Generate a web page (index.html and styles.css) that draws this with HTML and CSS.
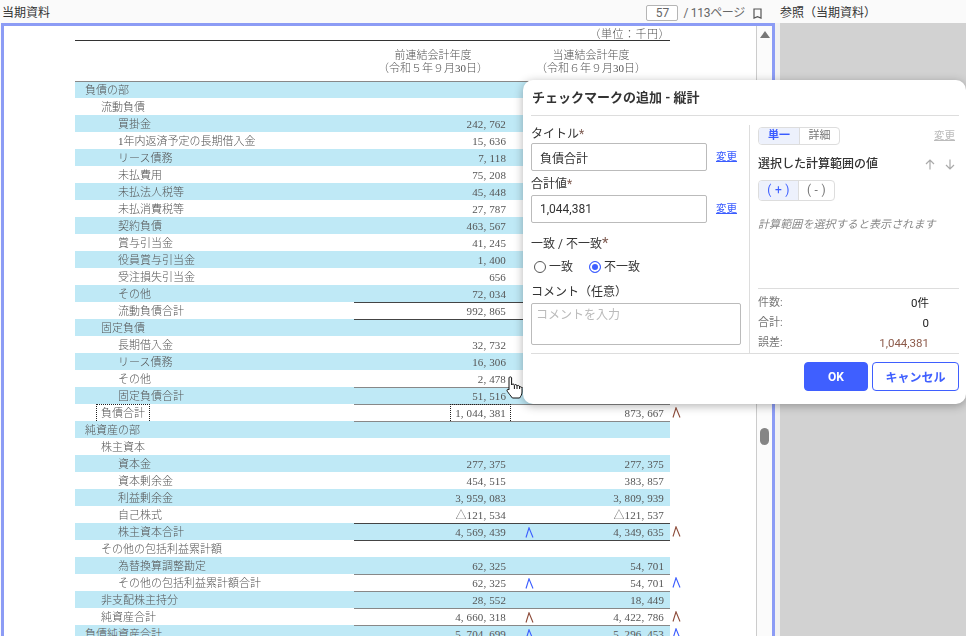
FILE: index.html
```html
<!DOCTYPE html>
<html>
	<head>
		<meta charset="UTF-8">
		<title>当期資料</title>
		<link rel="stylesheet" href="styles.css">
	</head>
	<body>
		<svg class="defs" width="0" height="0">
			<symbol id="chk" viewBox="0 0 9 11"><path d="M1 10.5 L4 .8 L8 10.5" fill="none" stroke="currentColor" stroke-width="1.1"/></symbol>
		</svg>

		<div class="bar">
			<div class="bar-left">
				<span class="bar-title">当期資料</span>
				<div class="pager">
					<span class="page-no">57</span>
					<span class="page-count">/ 113ページ</span>
					<svg class="bookmark" width="9" height="11" viewBox="0 0 9 11"><path d="M1 1 H8 V10 L4.5 8.6 L1 10 Z" fill="none" stroke="#555" stroke-width="1.2"/></svg>
				</div>
			</div>
			<span class="bar-right">参照（当期資料）</span>
		</div>

		<div class="main">
			<div class="viewer">
				<div class="page">
					<div class="unit">（単位：千円）</div>
					<div class="head">
						<div>前連結会計年度<br>（令和５年９月30日）</div>
						<div>当連結会計年度<br>（令和６年９月30日）</div>
					</div>

					<div class="row"><div class="cells tint top"><span class="name">負債の部</span><div class="nums"></div></div></div>
					<div class="row"><div class="cells"><span class="name l1">流動負債</span><div class="nums"></div></div></div>
					<div class="row"><div class="cells tint"><span class="name l2">買掛金</span><div class="nums"><span class="n1">242, 762</span></div></div></div>
					<div class="row"><div class="cells"><span class="name l2">1年内返済予定の長期借入金</span><div class="nums"><span class="n1">15, 636</span></div></div></div>
					<div class="row"><div class="cells tint"><span class="name l2">リース債務</span><div class="nums"><span class="n1">7, 118</span></div></div></div>
					<div class="row"><div class="cells"><span class="name l2">未払費用</span><div class="nums"><span class="n1">75, 208</span></div></div></div>
					<div class="row"><div class="cells tint"><span class="name l2">未払法人税等</span><div class="nums"><span class="n1">45, 448</span></div></div></div>
					<div class="row"><div class="cells"><span class="name l2">未払消費税等</span><div class="nums"><span class="n1">27, 787</span></div></div></div>
					<div class="row"><div class="cells tint"><span class="name l2">契約負債</span><div class="nums"><span class="n1">463, 567</span></div></div></div>
					<div class="row"><div class="cells"><span class="name l2">賞与引当金</span><div class="nums"><span class="n1">41, 245</span></div></div></div>
					<div class="row"><div class="cells tint"><span class="name l2">役員賞与引当金</span><div class="nums"><span class="n1">1, 400</span></div></div></div>
					<div class="row"><div class="cells"><span class="name l2">受注損失引当金</span><div class="nums"><span class="n1">656</span></div></div></div>
					<div class="row"><div class="cells tint"><span class="name l2">その他</span><div class="nums"><span class="n1">72, 034</span></div></div></div>
					<div class="row"><div class="cells"><span class="name l2">流動負債合計</span><div class="nums ru"><span class="n1">992, 865</span></div></div></div>
					<div class="row"><div class="cells tint"><span class="name l1">固定負債</span><div class="nums ru"></div></div></div>
					<div class="row"><div class="cells"><span class="name l2">長期借入金</span><div class="nums"><span class="n1">32, 732</span></div></div></div>
					<div class="row"><div class="cells tint"><span class="name l2">リース債務</span><div class="nums"><span class="n1">16, 306</span></div></div></div>
					<div class="row"><div class="cells"><span class="name l2">その他</span><div class="nums"><span class="n1">2, 478</span></div></div></div>
					<div class="row"><div class="cells tint"><span class="name l2">固定負債合計</span><div class="nums ru2"><span class="n1">51, 516</span></div></div></div>
					<div class="row">
						<div class="cells"><span class="name l1"><span class="sel">負債合計</span></span><div class="nums ru2"><span class="n1"><span class="sel">1, 044, 381</span></span><span class="c1"></span><span class="n2">873, 667</span></div></div>
						<svg class="mark out brown"><use href="#chk"/></svg>
					</div>
					<div class="row"><div class="cells tint"><span class="name">純資産の部</span><div class="nums ru2"></div></div></div>
					<div class="row"><div class="cells"><span class="name l1">株主資本</span><div class="nums"></div></div></div>
					<div class="row"><div class="cells tint"><span class="name l2">資本金</span><div class="nums"><span class="n1">277, 375</span><span class="c1"></span><span class="n2">277, 375</span></div></div></div>
					<div class="row"><div class="cells"><span class="name l2">資本剰余金</span><div class="nums"><span class="n1">454, 515</span><span class="c1"></span><span class="n2">383, 857</span></div></div></div>
					<div class="row"><div class="cells tint"><span class="name l2">利益剰余金</span><div class="nums"><span class="n1">3, 959, 083</span><span class="c1"></span><span class="n2">3, 809, 939</span></div></div></div>
					<div class="row"><div class="cells"><span class="name l2">自己株式</span><div class="nums"><span class="n1">△121, 534</span><span class="c1"></span><span class="n2">△121, 537</span></div></div></div>
					<div class="row">
						<div class="cells tint"><span class="name l2">株主資本合計</span><div class="nums ru"><span class="n1">4, 569, 439</span><span class="c1"><svg class="mark blue"><use href="#chk"/></svg></span><span class="n2">4, 349, 635</span></div></div>
						<svg class="mark out brown"><use href="#chk"/></svg>
					</div>
					<div class="row"><div class="cells"><span class="name l1">その他の包括利益累計額</span><div class="nums ru"></div></div></div>
					<div class="row"><div class="cells tint"><span class="name l2">為替換算調整勘定</span><div class="nums"><span class="n1">62, 325</span><span class="c1"></span><span class="n2">54, 701</span></div></div></div>
					<div class="row">
						<div class="cells"><span class="name l2">その他の包括利益累計額合計</span><div class="nums ru2"><span class="n1">62, 325</span><span class="c1"><svg class="mark blue"><use href="#chk"/></svg></span><span class="n2">54, 701</span></div></div>
						<svg class="mark out blue"><use href="#chk"/></svg>
					</div>
					<div class="row"><div class="cells tint"><span class="name l1">非支配株主持分</span><div class="nums ru2"><span class="n1">28, 552</span><span class="c1"></span><span class="n2">18, 449</span></div></div></div>
					<div class="row">
						<div class="cells"><span class="name l1">純資産合計</span><div class="nums ru2"><span class="n1">4, 660, 318</span><span class="c1"><svg class="mark brown"><use href="#chk"/></svg></span><span class="n2">4, 422, 786</span></div></div>
						<svg class="mark out brown"><use href="#chk"/></svg>
					</div>
					<div class="row">
						<div class="cells tint"><span class="name">負債純資産合計</span><div class="nums ru2"><span class="n1">5, 704, 699</span><span class="c1"><svg class="mark blue"><use href="#chk"/></svg></span><span class="n2">5, 296, 453</span></div></div>
						<svg class="mark out blue"><use href="#chk"/></svg>
					</div>
				</div>
				<div class="scroll">
					<span class="scroll-up"></span>
					<span class="scroll-thumb"></span>
				</div>
			</div>
			<div class="gutter"></div>
			<div class="panel"></div>
		</div>

		<div class="dialog">
			<div class="dlg-title">チェックマークの追加 - 縦計</div>
			<div class="dlg-body">
				<div class="dlg-left">
					<div class="lbl">タイトル<i>*</i></div>
					<div class="field">
						<input class="txt" value="負債合計">
						<a class="link">変更</a>
					</div>
					<div class="lbl lbl-next">合計値<i>*</i></div>
					<div class="field">
						<input class="txt" value="1,044,381">
						<a class="link">変更</a>
					</div>
					<div class="lbl lbl-match">一致 / 不一致<i class="big">*</i></div>
					<div class="radios">
						<span class="radio"></span><span class="radio-text">一致</span>
						<span class="radio on"></span><span class="radio-text">不一致</span>
					</div>
					<div class="lbl lbl-comment">コメント（任意）</div>
					<textarea class="memo" placeholder="コメントを入力"></textarea>
				</div>
				<div class="dlg-right">
					<div class="tabs-row">
						<div class="seg tabs"><span class="on">単一</span><span>詳細</span></div>
						<a class="link off">変更</a>
					</div>
					<div class="range-row">
						<span class="range-title">選択した計算範囲の値</span>
						<span class="arrows">
							<svg width="10" height="11" viewBox="0 0 10 11"><path d="M5 10.5 V1 M1 5 L5 1 L9 5" fill="none" stroke="#aaa" stroke-width="1.2"/></svg>
							<svg width="10" height="11" viewBox="0 0 10 11"><path d="M5 .5 V10 M1 6 L5 10 L9 6" fill="none" stroke="#aaa" stroke-width="1.2"/></svg>
						</span>
					</div>
					<div class="seg signs"><span class="on">( + )</span><span>( - )</span></div>
					<div class="hint">計算範囲を選択すると表示されます</div>
					<div class="stats">
						<div class="stat"><span>件数:</span><b>0件</b></div>
						<div class="stat"><span>合計:</span><b>0</b></div>
						<div class="stat"><span>誤差:</span><b class="diff">1,044,381</b></div>
					</div>
				</div>
			</div>
			<div class="dlg-foot">
				<button class="btn ok">OK</button>
				<button class="btn cancel">キャンセル</button>
			</div>
		</div>

		<svg class="hand" width="17" height="23" viewBox="0 0 17 23"><path d="M3 1.8 C3 .6 5.6 .6 5.6 1.8 V9 C6 7.6 8.4 7.6 8.4 9.4 C8.8 8.2 11 8.2 11 10 C11.6 9 13.6 9.2 13.6 11 C14.2 10.4 16 10.8 16 12.4 V16 C16 19 14.6 20.2 13.6 22 H6.4 C5 20 2.6 17.6 1.2 15.2 C.4 13.6 2 12.6 3 13.8 Z M8.4 9.4 V13 M11 10 V13 M13.6 11 V13" fill="#fff" stroke="#111" stroke-width="1"/></svg>
	</body>
</html>
```

FILE: styles.css
```css
*{
	margin: 0;
	padding: 0;
	box-sizing: border-box;
}
html,body{
	width: 966px;
	height: 636px;
	overflow: hidden;
}
body{
	position: relative;
	font: 12px/16px Roboto,"Noto Sans CJK JP",sans-serif;
	color: #333;
	background: #fafafa;
}
.defs{
	position: absolute;
}

/* top bar */
.bar{
	display: flex;
	height: 23px;
	padding-top: 3px;
	align-items: center;
}
.bar-left{
	display: flex;
	align-items: center;
	justify-content: space-between;
	width: 780px;
	padding: 0 18px 0 2px;
}
.pager{
	display: flex;
	align-items: center;
	color: #666;
}
.page-no{
	width: 32px;
	height: 16px;
	margin-right: 5px;
	border: 1px solid #b5b5b5;
	border-radius: 2px;
	background: #fff;
	text-align: center;
	line-height: 14px;
}
.page-count{
	letter-spacing: -.3px;
}
.bookmark{
	margin-left: 8px;
}

/* document viewer */
.main{
	display: flex;
	height: 613px;
}
.viewer{
	display: flex;
	width: 774px;
	margin-left: 1px;
	border: 3px solid #8c9cf5;
	border-bottom: 0;
	background: #fff;
}
.gutter{
	width: 5px;
	background: #f1f1f1;
}
.panel{
	flex: 1;
	background: #d2d2d2;
}
.scroll{
	display: flex;
	flex-direction: column;
	align-items: center;
	width: 16px;
	border-left: 1px solid #ccc;
	background: #fbfbfb;
}
.scroll-up{
	width: 0;
	height: 0;
	margin-top: 5px;
	border: 5px solid transparent;
	border-top: 0;
	border-bottom: 7px solid #777;
}
.scroll-thumb{
	width: 9px;
	height: 17px;
	margin-top: 390px;
	border-radius: 5px;
	background: #858585;
}
.page{
	width: 752px;
	padding-left: 71px;
	font: 11px/17px "Liberation Serif","Noto Sans CJK JP",serif;
	font-weight: 300;
	color: #555;
	filter: blur(.3px);
}
.unit{
	width: 595px;
	height: 15px;
	padding-top: 1px;
	border-bottom: 1px solid #333;
	text-align: right;
	line-height: 14px;
	letter-spacing: .5px;
}
.head{
	display: flex;
	width: 595px;
	height: 40px;
	padding: 8px 0 0 279px;
	text-align: center;
	line-height: 13px;
}
.head div{
	width: 158px;
}
.row{
	display: flex;
	height: 17px;
}
.cells{
	display: flex;
	width: 595px;
}
.cells.top{
	box-shadow: inset 0 1px #888;
}
.tint{
	background: #bfe9f6;
}
.name{
	width: 279px;
	padding: 1px 0 0 10px;
}
.name.l1{
	padding-left: 26px;
}
.name.l2{
	padding-left: 43px;
}
.nums{
	display: flex;
	width: 316px;
	border-top: 1px solid transparent;
	line-height: 16px;
	letter-spacing: .12px;
}
.nums.ru{
	border-top-color: #444;
}
.nums.ru2{
	border-top-color: #888;
}
.n1{
	width: 152px;
	text-align: right;
}
.c1{
	width: 32px;
	padding-left: 19px;
}
.n2{
	width: 126px;
	text-align: right;
}
.mark{
	display: block;
	width: 9px;
	height: 11px;
	margin-top: 3px;
}
.mark.out{
	margin-left: 2px;
}
.blue{
	color: #3a5cff;
}
.brown{
	color: #8c4a38;
}
.sel{
	display: inline-block;
	height: 19px;
	margin: -1px -5px 0;
	padding: 0 4px;
	border: 1px dotted #222;
	line-height: 17px;
	color: #555;
}

/* dialog */
.dialog{
	position: absolute;
	top: 80px;
	left: 523px;
	width: 443px;
	height: 324px;
	padding: 0 7px 0 8px;
	border-radius: 10px;
	background: #fff;
	box-shadow: 0 2px 10px rgba(0,0,0,.3);
}
.dlg-title{
	height: 36px;
	padding-left: 1px;
	border-bottom: 1px solid #ddd;
	font-size: 13px;
	font-weight: 700;
	line-height: 35px;
}
.dlg-body{
	display: flex;
	height: 238px;
	padding-top: 9px;
	border-bottom: 1px solid #ddd;
}
.dlg-left{
	width: 219px;
	border-right: 1px solid #ddd;
}
.lbl{
	height: 16px;
	margin-bottom: 2px;
	font-size: 12px;
	line-height: 18px;
}
.lbl i{
	font-style: normal;
	color: #7d5a50;
}
.lbl i.big{
	font-size: 15px;
}
.lbl-next{
	margin-top: 4px;
	margin-bottom: 4px;
}
.lbl-match{
	margin-top: 12px;
	margin-bottom: 5px;
	line-height: 16px;
}
.lbl-comment{
	margin-top: 7px;
	margin-bottom: 4px;
}
.field{
	display: flex;
	align-items: center;
	gap: 9px;
}
.txt{
	width: 176px;
	height: 28px;
	padding: 0 8px;
	border: 1px solid #bbb;
	border-radius: 2px;
	font: 12px Roboto,"Noto Sans CJK JP",sans-serif;
	color: #333;
}
.link{
	font-size: 10.5px;
	color: #3a5cff;
	text-decoration: underline;
}
.link.off{
	color: #bbb;
}
.radios{
	display: flex;
	align-items: center;
	height: 20px;
	padding: 1px 0 0 3px;
}
.radio{
	width: 12px;
	height: 12px;
	border: 1px solid #555;
	border-radius: 50%;
	background: #fff;
}
.radio.on{
	border-color: #3f5fff;
	box-shadow: inset 0 0 0 2px #fff;
	background: #3f5fff;
}
.radio-text{
	margin: 0 16px 0 3px;
}
.memo{
	display: block;
	width: 210px;
	height: 42px;
	padding: 3px 4px;
	border: 1px solid #bbb;
	border-radius: 2px;
	font: 12px/16px Roboto,"Noto Sans CJK JP",sans-serif;
	resize: none;
}
.memo::placeholder{
	color: #bbb;
}
.dlg-right{
	display: flex;
	flex-direction: column;
	flex: 1;
	padding-left: 8px;
}
.tabs-row{
	display: flex;
	justify-content: space-between;
	align-items: center;
	padding: 2px 4px 0 0;
}
.seg{
	display: flex;
	border: 1px solid #ddd;
	border-radius: 4px;
	overflow: hidden;
	color: #777;
	text-align: center;
}
.seg span + span{
	border-left: 1px solid #ddd;
}
.seg .on{
	background: #edf1fc;
	color: #3a5cff;
}
.tabs{
	height: 18px;
	font-size: 11px;
	line-height: 16px;
}
.tabs span{
	width: 40px;
}
.tabs .on{
	font-weight: 700;
}
.range-row{
	display: flex;
	justify-content: space-between;
	align-items: center;
	height: 20px;
	margin-top: 9px;
	padding-right: 4px;
}
.range-title{
	font-weight: 500;
}
.arrows{
	display: flex;
	gap: 10px;
}
.signs{
	width: 77px;
	height: 21px;
	margin-top: 6px;
	line-height: 19px;
	letter-spacing: .3px;
}
.signs span{
	width: 40px;
}
.signs span + span{
	width: 37px;
}
.hint{
	margin-top: 16px;
	font-size: 11px;
	letter-spacing: .1px;
	font-style: italic;
	color: #888;
}
.stats{
	margin-top: auto;
	padding-top: 4px;
	border-top: 1px solid #ddd;
}
.stat{
	display: flex;
	justify-content: space-between;
	height: 20px;
	padding-right: 30px;
	font-size: 11px;
	line-height: 20px;
	color: #777;
}
.stat b{
	font-size: 11.5px;
	font-weight: 400;
	color: #222;
}
.stat b.diff{
	color: #8c5a4a;
}
.dlg-foot{
	display: flex;
	justify-content: flex-end;
	gap: 4px;
	padding-top: 8px;
}
.btn{
	height: 29px;
	border: 1px solid #3f5fff;
	border-radius: 4px;
	font: 700 12px Roboto,"Noto Sans CJK JP",sans-serif;
}
.btn.ok{
	width: 64px;
	background: #3f5fff;
	color: #fff;
}
.btn.cancel{
	width: 87px;
	background: #fff;
	color: #3f5fff;
}
.hand{
	position: absolute;
	top: 376px;
	left: 506px;
}
```
